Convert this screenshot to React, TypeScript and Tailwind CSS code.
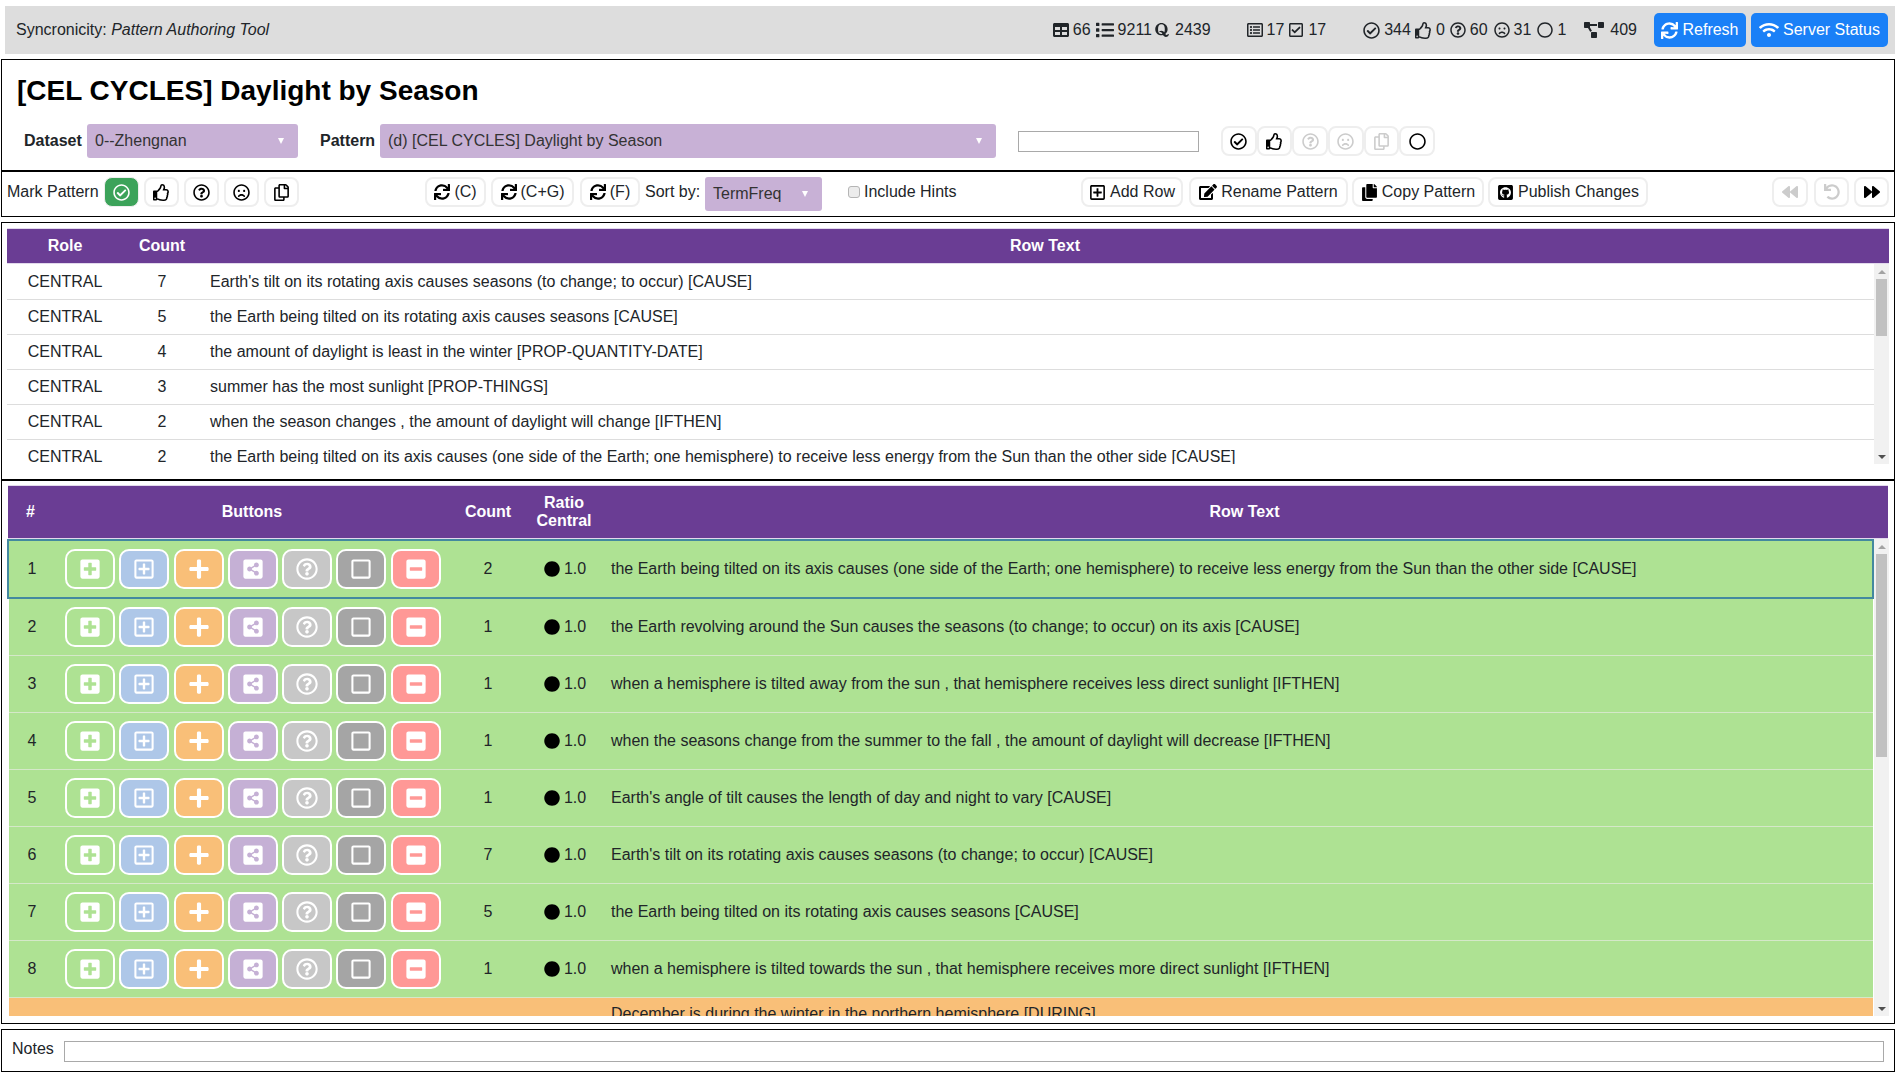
import type { ReactNode } from 'react'
import type { IconType } from 'react-icons'
import {
  FaBackward,
  FaCircle,
  FaCopy,
  FaEdit,
  FaForward,
  FaGithubSquare,
  FaList,
  FaMinusSquare,
  FaPlus,
  FaPlusSquare,
  FaProjectDiagram,
  FaQuora,
  FaRegCheckCircle,
  FaRegCheckSquare,
  FaRegCircle,
  FaRegCopy,
  FaRegFrown,
  FaRegListAlt,
  FaRegPlusSquare,
  FaRegQuestionCircle,
  FaRegSquare,
  FaRegThumbsUp,
  FaShareAltSquare,
  FaSync,
  FaTable,
  FaUndo,
  FaWifi,
} from 'react-icons/fa'

const topRows = [
  { role: 'CENTRAL', count: 7, text: "Earth's tilt on its rotating axis causes seasons (to change; to occur) [CAUSE]" },
  { role: 'CENTRAL', count: 5, text: 'the Earth being tilted on its rotating axis causes seasons [CAUSE]' },
  { role: 'CENTRAL', count: 4, text: 'the amount of daylight is least in the winter [PROP-QUANTITY-DATE]' },
  { role: 'CENTRAL', count: 3, text: 'summer has the most sunlight [PROP-THINGS]' },
  { role: 'CENTRAL', count: 2, text: 'when the season changes , the amount of daylight will change [IFTHEN]' },
  { role: 'CENTRAL', count: 2, text: 'the Earth being tilted on its axis causes (one side of the Earth; one hemisphere) to receive less energy from the Sun than the other side [CAUSE]' },
]

const patternRows = [
  { count: 2, text: 'the Earth being tilted on its axis causes (one side of the Earth; one hemisphere) to receive less energy from the Sun than the other side [CAUSE]' },
  { count: 1, text: 'the Earth revolving around the Sun causes the seasons (to change; to occur) on its axis [CAUSE]' },
  { count: 1, text: 'when a hemisphere is tilted away from the sun , that hemisphere receives less direct sunlight [IFTHEN]' },
  { count: 1, text: 'when the seasons change from the summer to the fall , the amount of daylight will decrease [IFTHEN]' },
  { count: 1, text: "Earth's angle of tilt causes the length of day and night to vary [CAUSE]" },
  { count: 7, text: "Earth's tilt on its rotating axis causes seasons (to change; to occur) [CAUSE]" },
  { count: 5, text: 'the Earth being tilted on its rotating axis causes seasons [CAUSE]' },
  { count: 1, text: 'when a hemisphere is tilted towards the sun , that hemisphere receives more direct sunlight [IFTHEN]' },
]

const rowButtons: { Icon: IconType; bg: string }[] = [
  { Icon: FaPlusSquare, bg: 'bg-[#aee293]' },
  { Icon: FaRegPlusSquare, bg: 'bg-[#aec7e8]' },
  { Icon: FaPlus, bg: 'bg-[#f9bf78]' },
  { Icon: FaShareAltSquare, bg: 'bg-[#c5b0d5]' },
  { Icon: FaRegQuestionCircle, bg: 'bg-[#c7c7c7]' },
  { Icon: FaRegSquare, bg: 'bg-[#a5a5a5]' },
  { Icon: FaMinusSquare, bg: 'bg-[#ff9896]' },
]

const markIcons = [
  { Icon: FaRegCheckCircle, cls: 'text-black' },
  { Icon: FaRegThumbsUp, cls: 'text-black' },
  { Icon: FaRegQuestionCircle, cls: 'text-[#cccccc]' },
  { Icon: FaRegFrown, cls: 'text-[#cccccc]' },
  { Icon: FaRegCopy, cls: 'text-[#cccccc]' },
  { Icon: FaRegCircle, cls: 'text-black' },
]

function Stat({ icon, value, gap = 'ml-[5px]', iconGap = 'gap-[4px]' }: { icon: ReactNode; value: string; gap?: string; iconGap?: string }) {
  return (
    <span className={`flex items-center ${iconGap} ${gap}`}>
      {icon}
      {value}
    </span>
  )
}

function ToolButton({ children, className = '' }: { children: ReactNode; className?: string }) {
  return (
    <div className={`h-[30px] shrink-0 flex items-center justify-center gap-[4px] bg-white border-2 border-[#eeeeee] rounded-[8px] text-[#212529] whitespace-nowrap ${className}`}>
      {children}
    </div>
  )
}

function PurpleSelect({ label, className }: { label: string; className: string }) {
  return (
    <div className={`h-[34px] shrink-0 bg-[#c8b1d6] rounded-[3px] flex items-center justify-between pl-[8px] pr-[14px] text-[#333333] ${className}`}>
      <span>{label}</span>
      <span className="w-0 h-0 border-x-[3px] border-x-transparent border-t-[6px] border-t-white" />
    </div>
  )
}

function Scrollbar({ thumb }: { thumb: string }) {
  return (
    <div className="w-[15px] shrink-0 bg-[#f1f1f1] flex flex-col items-center">
      <div className="h-[15px] flex items-center justify-center">
        <span className="w-0 h-0 border-x-[4px] border-x-transparent border-b-[4px] border-b-[#a3a3a3]" />
      </div>
      <div className={`w-[11px] bg-[#c1c1c1] ${thumb}`} />
      <div className="mt-auto h-[15px] flex items-center justify-center">
        <span className="w-0 h-0 border-x-[4px] border-x-transparent border-t-[4px] border-t-[#505050]" />
      </div>
    </div>
  )
}

export default function App() {
  return (
    <div className="w-[1900px] h-[1080px] overflow-hidden bg-white pl-[1px] pr-[5px] text-[16px] leading-[24px] text-black font-['Liberation_Sans',Arial,sans-serif]">
      {/* Top bar */}
      <div className="mt-[6px] ml-[4px] h-[48px] bg-[#dddddd] flex items-center pl-[11px] pr-[7px] text-[#212529]">
        <span>
          Syncronicity: <i>Pattern Authoring Tool</i>
        </span>
        <div className="ml-auto flex items-center">
          <Stat gap="" icon={<FaTable className="text-[16px]" />} value="66" />
          <Stat icon={<FaList className="text-[18px]" />} value="9211" />
          <Stat gap="ml-[2px]" iconGap="gap-[5px]" icon={<FaQuora className="text-[16px]" />} value="2439" />
          <Stat gap="ml-[36px]" icon={<FaRegListAlt className="text-[16px]" />} value="17" />
          <Stat gap="ml-[4px]" icon={<FaRegCheckSquare className="text-[16px]" />} value="17" />
          <Stat gap="ml-[37px]" icon={<FaRegCheckCircle className="text-[17px]" />} value="344" />
          <Stat gap="ml-[4px]" icon={<FaRegThumbsUp className="text-[17px]" />} value="0" />
          <Stat gap="ml-[5px]" icon={<FaRegQuestionCircle className="text-[16px]" />} value="60" />
          <Stat gap="ml-[6px]" icon={<FaRegFrown className="text-[16px]" />} value="31" />
          <Stat gap="ml-[6px]" icon={<FaRegCircle className="text-[16px]" />} value="1" />
          <Stat gap="ml-[18px]" iconGap="gap-[6px]" icon={<FaProjectDiagram className="w-[20px] h-[16px]" />} value="409" />
          <div className="ml-[17px] h-[34px] w-[92px] rounded-[5px] bg-[#1a80f7] text-white flex items-center justify-center gap-[4px]">
            <FaSync className="text-[17px]" />
            Refresh
          </div>
          <div className="ml-[5px] h-[34px] w-[137px] rounded-[5px] bg-[#1a80f7] text-white flex items-center justify-center gap-[4px]">
            <FaWifi className="w-[20px] h-[16px]" />
            Server Status
          </div>
        </div>
      </div>

      {/* Title and selectors */}
      <div className="mt-[5px] h-[112px] border border-black pl-[15px]">
        <h1 className="mt-[14px] text-[28px] leading-[34px] font-bold">[CEL CYCLES] Daylight by Season</h1>
        <div className="mt-[16px] flex items-center">
          <span className="ml-[7px] mr-[5px] w-[58px] font-bold text-[#212529]">Dataset</span>
          <PurpleSelect label="0--Zhengnan" className="w-[211px]" />
          <span className="ml-[22px] mr-[4px] w-[56px] font-bold text-[#212529]">Pattern</span>
          <PurpleSelect label="(d) [CEL CYCLES] Daylight by Season" className="w-[616px]" />
          <div className="ml-[22px] w-[181px] h-[21px] border border-[#a9a9a9] bg-white" />
          <div className="ml-[22px] flex">
            {markIcons.map(({ Icon, cls }, i) => (
              <ToolButton key={i} className="w-[35.67px]">
                <Icon className={`text-[17px] ${cls}`} />
              </ToolButton>
            ))}
          </div>
        </div>
      </div>

      {/* Toolbar */}
      <div className="h-[46px] border border-black flex items-start pt-[5px] pl-[5px] pr-[5px] text-[#212529]">
        <span className="w-[91px] mr-[6px] leading-[30px] whitespace-nowrap">Mark Pattern</span>
        <div className="h-[30px] w-[35px] shrink-0 rounded-[8px] border border-[#eeeeee] bg-[#3ca35a] text-white flex items-center justify-center">
          <FaRegCheckCircle className="text-[17px]" />
        </div>
        <ToolButton className="ml-[5px] w-[35px]"><FaRegThumbsUp className="text-[17px] text-black" /></ToolButton>
        <ToolButton className="ml-[5px] w-[35px]"><FaRegQuestionCircle className="text-[17px] text-black" /></ToolButton>
        <ToolButton className="ml-[5px] w-[35px]"><FaRegFrown className="text-[17px] text-black" /></ToolButton>
        <ToolButton className="ml-[5px] w-[35px]"><FaRegCopy className="text-[17px] text-black" /></ToolButton>
        <ToolButton className="ml-[126px] w-[61px]"><FaSync className="text-[16px] text-black" />(C)</ToolButton>
        <ToolButton className="ml-[5px] w-[83px]"><FaSync className="text-[16px] text-black" />(C+G)</ToolButton>
        <ToolButton className="ml-[6px] w-[60px]"><FaSync className="text-[16px] text-black" />(F)</ToolButton>
        <span className="ml-[5px] mr-[5px] w-[55px] leading-[30px] whitespace-nowrap">Sort by:</span>
        <PurpleSelect label="TermFreq" className="w-[117px]" />
        <div className="ml-[26px] mt-[9px] w-[12px] h-[12px] shrink-0 rounded-[3px] border border-[#b5b5b5] bg-[#ececec]" />
        <span className="ml-[4px] w-[92px] leading-[30px] whitespace-nowrap">Include Hints</span>
        <ToolButton className="ml-[125px] w-[102px]"><FaRegPlusSquare className="text-[17px] text-black" />Add Row</ToolButton>
        <ToolButton className="ml-[6px] w-[159px]"><FaEdit className="w-[18px] h-[16px] text-black" />Rename Pattern</ToolButton>
        <ToolButton className="ml-[4px] w-[132px]"><FaCopy className="text-[17px] text-black" />Copy Pattern</ToolButton>
        <ToolButton className="ml-[4px] w-[160px]"><FaGithubSquare className="text-[17px] text-black" />Publish Changes</ToolButton>
        <ToolButton className="ml-auto w-[36px]"><FaBackward className="text-[16px] text-[#cccccc]" /></ToolButton>
        <ToolButton className="ml-[6px] w-[35px]"><FaUndo className="text-[16px] text-[#cccccc]" /></ToolButton>
        <ToolButton className="ml-[5px] w-[35px]"><FaForward className="text-[16px] text-black" /></ToolButton>
      </div>

      {/* Frequency table */}
      <div className="mt-[5px] h-[258px] border border-black pl-[5px] pr-[5px] pt-[5px] text-[#212529]">
        <div className="h-[36px] border-y border-[#e2d9ec] bg-[#6a3d94] text-white font-bold flex items-center">
          <div className="w-[116px] text-center">Role</div>
          <div className="w-[78px] text-center">Count</div>
          <div className="flex-1 text-center">Row Text</div>
        </div>
        <div className="h-[200px] flex">
          <div className="flex-1 min-w-0 overflow-hidden pt-[1px]">
            {topRows.map((row, i) => (
              <div key={i} className="h-[35px] flex items-center border-b border-[#dddddd]">
                <div className="w-[116px] text-center">{row.role}</div>
                <div className="w-[78px] text-center">{row.count}</div>
                <div className="flex-1 pl-[9px] whitespace-nowrap">{row.text}</div>
              </div>
            ))}
          </div>
          <Scrollbar thumb="h-[57px]" />
        </div>
      </div>

      {/* Pattern rows */}
      <div className="h-[544px] border border-black pl-[5px] pr-[5px] pt-[4px] text-[#212529]">
        <div className="h-[54px] ml-[1px] mr-[1px] border-y border-[#e2d9ec] bg-[#6a3d94] text-white font-bold flex items-center leading-[18px]">
          <div className="w-[45px] text-center">#</div>
          <div className="w-[398px] text-center">Buttons</div>
          <div className="w-[74px] text-center">Count</div>
          <div className="w-[78px] text-center">Ratio<br />Central</div>
          <div className="flex-1 text-center pr-[2px]">Row Text</div>
        </div>
        <div className="h-[477px] flex">
          <div className="flex-1 min-w-0 overflow-hidden">
            {patternRows.map((row, i) => (
              <div
                key={i}
                className={
                  i === 0
                    ? 'h-[60px] flex items-center bg-[#aee293] border-2 border-[#43899f]'
                    : 'h-[57px] ml-[2px] mr-[1px] flex items-center bg-[#aee293] border-b border-[#d5e8c9]'
                }
              >
                <div className="w-[44px] text-center pl-[2px]">{i + 1}</div>
                <div className="w-[398px] flex gap-[4.3px] pl-[12px]">
                  {rowButtons.map(({ Icon, bg }, b) => (
                    <div key={b} className={`w-[50px] h-[40px] rounded-[10px] border-2 border-white ${bg} flex items-center justify-center text-white`}>
                      <Icon className="text-[22px]" />
                    </div>
                  ))}
                </div>
                <div className="w-[74px] text-center">{row.count}</div>
                <div className="w-[78px] flex items-center justify-center gap-[4px] pl-[2px]">
                  <FaCircle className="text-[16px] text-black" />
                  1.0
                </div>
                <div className="flex-1 pl-[8px] whitespace-nowrap">{row.text}</div>
              </div>
            ))}
            <div className="h-[30px] ml-[2px] mr-[1px] bg-[#f9bf78] pl-[602px] pt-[4px] whitespace-nowrap">
              December is during the winter in the northern hemisphere [DURING]
            </div>
          </div>
          <Scrollbar thumb="h-[203px]" />
        </div>
      </div>

      {/* Notes */}
      <div className="mt-[5px] h-[43px] border border-black flex items-center pl-[10px] pr-[10px] text-[#212529]">
        <span className="mr-[9px] w-[43px] pb-[3px]">Notes</span>
        <div className="flex-1 h-[21px] mt-[1px] border border-[#a9a9a9]" />
      </div>
    </div>
  )
}
